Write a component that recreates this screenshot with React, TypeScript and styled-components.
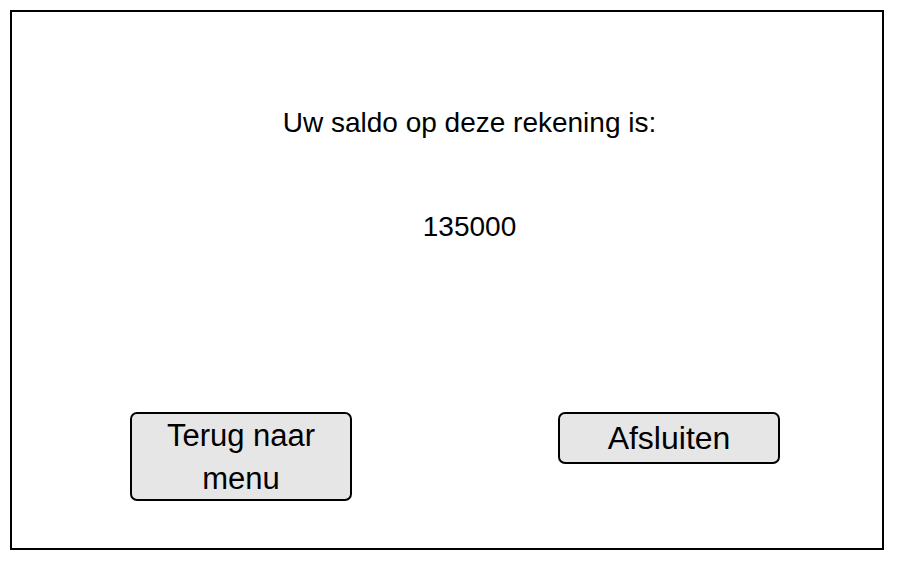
import React from "react";
import styled, { createGlobalStyle } from "styled-components";

const GlobalStyle = createGlobalStyle`
  html, body {
    margin: 0;
    padding: 0;
    background: #ffffff;
  }
  body {
    font-family: "Liberation Sans", Arial, Helvetica, sans-serif;
    color: #000000;
  }
`;

const Page = styled.div`
  padding: 10px 0 0 10px;
`;

const Frame = styled.div`
  box-sizing: border-box;
  width: 874px;
  height: 540px;
  border: 2px solid #000;
  display: flex;
  flex-direction: column;
`;

const Message = styled.div`
  display: flex;
  flex-direction: column;
  align-items: center;
  padding: 95px 0 0 45px;
`;

const Label = styled.div`
  font-size: 28px;
  line-height: 32px;
`;

const Amount = styled.div`
  font-size: 28px;
  line-height: 32px;
  margin-top: 72px;
`;

const ButtonRow = styled.div`
  display: flex;
  align-items: flex-start;
  gap: 206px;
  padding-left: 118px;
  margin-top: 169px;
`;

const ActionButton = styled.button<{ $tall?: boolean }>`
  box-sizing: border-box;
  width: 222px;
  height: ${(p) => (p.$tall ? "89px" : "52px")};
  background: #e6e6e6;
  border: 2px solid #000;
  border-radius: 7px;
  font-family: "Liberation Sans", Arial, Helvetica, sans-serif;
  font-size: ${(p) => (p.$tall ? "31px" : "32px")};
  line-height: 43px;
  color: #000;
  padding: 0 8px;
  display: flex;
  align-items: center;
  justify-content: center;
  text-align: center;
  cursor: pointer;
`;

export default function App() {
  return (
    <>
      <GlobalStyle />
      <Page>
        <Frame>
          <Message>
            <Label>Uw saldo op deze rekening is:</Label>
            <Amount>135000</Amount>
          </Message>
          <ButtonRow>
            <ActionButton $tall>
              Terug naar
              <br />
              menu
            </ActionButton>
            <ActionButton>Afsluiten</ActionButton>
          </ButtonRow>
        </Frame>
      </Page>
    </>
  );
}
